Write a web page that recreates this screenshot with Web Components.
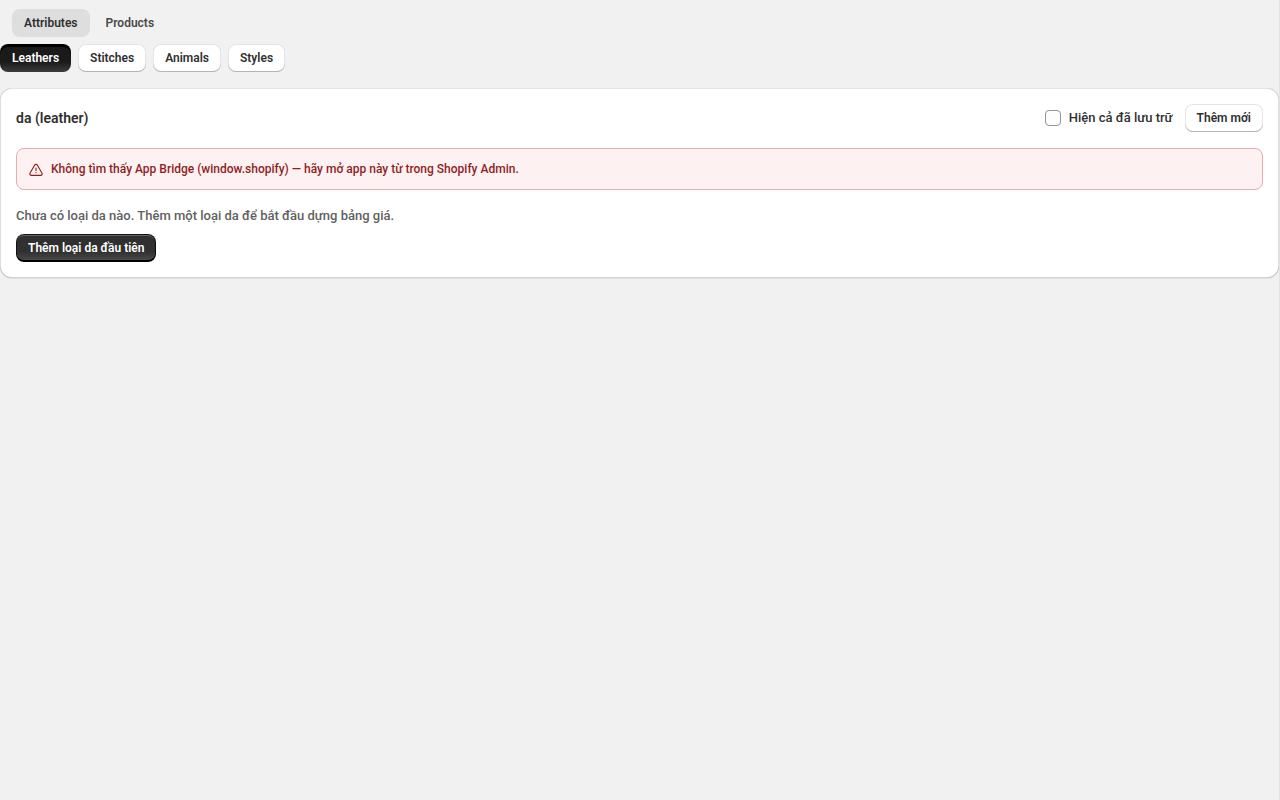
<!DOCTYPE html>
<html lang="vi">
<head>
<meta charset="utf-8">
<meta name="viewport" content="width=device-width, initial-scale=1">
<title>Attributes</title>
<style>
  body {
    margin: 0;
    min-height: 100vh;
    box-sizing: border-box;
    border-right: 1px solid #e3e3e3;
    background: #f1f1f1;
    color: #303030;
    font: 500 13px/20px Roboto, "Noto Sans", sans-serif;
  }
</style>
</head>
<body>
<attributes-page></attributes-page>

<script>
class BaseElement extends HTMLElement {
  constructor() {
    super();
    this.attachShadow({ mode: 'open' }).innerHTML = this.constructor.markup;
  }
}

// Button with three looks: secondary (default), primary, pressed
class UiButton extends BaseElement {
  static markup = `
    <style>
      :host { display: block; }
      button {
        display: block;
        height: 28px;
        margin: 0;
        padding: 0 12px;
        border: 0;
        border-radius: 8px;
        background: #fff;
        color: #303030;
        font: 650 12px/16px Roboto, "Noto Sans", sans-serif;
        white-space: nowrap;
        cursor: pointer;
        box-shadow: inset 0 -1px 0 #b5b5b5, inset 0 0 0 1px rgba(0, 0, 0, .1);
      }
      :host([variant="primary"]) button {
        background: linear-gradient(180deg, rgba(48, 48, 48, 0) 63%, rgba(255, 255, 255, .15) 100%), #303030;
        color: #fff;
        box-shadow: inset 0 -2px 0 #000, inset 0 0 0 1px rgba(0, 0, 0, .8), inset 0 2px 0 rgba(255, 255, 255, .25), inset 1px 0 0 rgba(255, 255, 255, .2);
      }
      :host([variant="pressed"]) button {
        background: linear-gradient(180deg, rgba(48, 48, 48, 0) 63%, rgba(255, 255, 255, .15) 100%), #1a1a1a;
        color: #fff;
        box-shadow: inset 0 3px 0 #000;
      }
    </style>
    <button type="button"><slot></slot></button>`;
}

class UiTab extends BaseElement {
  static markup = `
    <style>
      :host { display: block; }
      button {
        display: block;
        height: 28px;
        margin: 0;
        padding: 0 12px;
        border: 0;
        border-radius: 8px;
        background: transparent;
        color: #4a4a4a;
        font: 600 12px/16px Roboto, "Noto Sans", sans-serif;
        cursor: pointer;
      }
      :host([selected]) button { background: #dedede; color: #303030; }
    </style>
    <button type="button"><slot></slot></button>`;
}

class UiCheckbox extends BaseElement {
  static markup = `
    <style>
      :host { display: block; }
      label { display: flex; align-items: center; gap: 8px; cursor: pointer; }
      input {
        appearance: none;
        box-sizing: border-box;
        width: 16px;
        height: 16px;
        margin: 0;
        border: 1px solid #959595;
        border-radius: 4px;
        background: #fdfdfd;
      }
      input:checked { background: #303030; }
    </style>
    <label><input type="checkbox"><span><slot></slot></span></label>`;
}

class UiBanner extends BaseElement {
  static markup = `
    <style>
      :host {
        display: flex;
        align-items: center;
        gap: 8px;
        padding: 10px 12px;
        border: 1px solid #eaabab;
        border-radius: 8px;
        background: #fef1f1;
        color: #8e1f1f;
        font-size: 12px;
      }
      svg { flex: none; width: 14px; height: 14px; margin-top: 2px; }
      p { margin: 0; }
    </style>
    <svg viewBox="0 0 14 14" fill="none" stroke="#8e1f1f" stroke-width="1.1" stroke-linecap="round" stroke-linejoin="round" aria-hidden="true">
      <path d="M5.7 2.1a1.5 1.5 0 0 1 2.6 0l4.6 8a1.5 1.5 0 0 1-1.3 2.3H2.4a1.5 1.5 0 0 1-1.3-2.3z"/>
      <path d="M7 5.1v2.3"/>
      <circle cx="7" cy="9.6" r=".7" fill="#8e1f1f" stroke="none"/>
    </svg>
    <p><slot></slot></p>`;
}

class UiCard extends BaseElement {
  static markup = `
    <style>
      :host {
        display: block;
        padding: 16px;
        border-radius: 12px;
        background: #fff;
        box-shadow: 0 1px 0 rgba(26, 26, 26, .07), inset 1px 0 0 rgba(0, 0, 0, .13), inset -1px 0 0 rgba(0, 0, 0, .13), inset 0 -1px 0 rgba(0, 0, 0, .17), inset 0 1px 0 rgba(204, 204, 204, .5);
      }
      header { display: flex; align-items: center; justify-content: space-between; margin-bottom: 16px; }
      .actions { display: flex; align-items: center; gap: 12px; }
    </style>
    <header>
      <slot name="title"></slot>
      <div class="actions"><slot name="actions"></slot></div>
    </header>
    <slot></slot>`;
}

class AttributesPage extends BaseElement {
  static markup = `
    <style>
      :host { display: block; }
      .tabs { display: flex; gap: 4px; padding: 9px 12px 7px; }
      .kinds { display: flex; gap: 7px; margin-bottom: 16px; }
      h2 { margin: 0; font-size: 14px; font-weight: 650; line-height: 20px; }
      .empty { margin: 16px 0 8px; color: #616161; }
    </style>
    <nav class="tabs">
      <ui-tab selected>Attributes</ui-tab>
      <ui-tab>Products</ui-tab>
    </nav>
    <nav class="kinds">
      <ui-button variant="pressed">Leathers</ui-button>
      <ui-button>Stitches</ui-button>
      <ui-button>Animals</ui-button>
      <ui-button>Styles</ui-button>
    </nav>
    <ui-card>
      <h2 slot="title">da (leather)</h2>
      <ui-checkbox slot="actions">Hiện cả đã lưu trữ</ui-checkbox>
      <ui-button slot="actions">Thêm mới</ui-button>
      <ui-banner>Không tìm thấy App Bridge (window.shopify) — hãy mở app này từ trong Shopify Admin.</ui-banner>
      <p class="empty">Chưa có loại da nào. Thêm một loại da để bắt đầu dựng bảng giá.</p>
      <ui-button variant="primary">Thêm loại da đầu tiên</ui-button>
    </ui-card>`;
}

customElements.define('ui-button', UiButton);
customElements.define('ui-tab', UiTab);
customElements.define('ui-checkbox', UiCheckbox);
customElements.define('ui-banner', UiBanner);
customElements.define('ui-card', UiCard);
customElements.define('attributes-page', AttributesPage);
</script>
</body>
</html>
